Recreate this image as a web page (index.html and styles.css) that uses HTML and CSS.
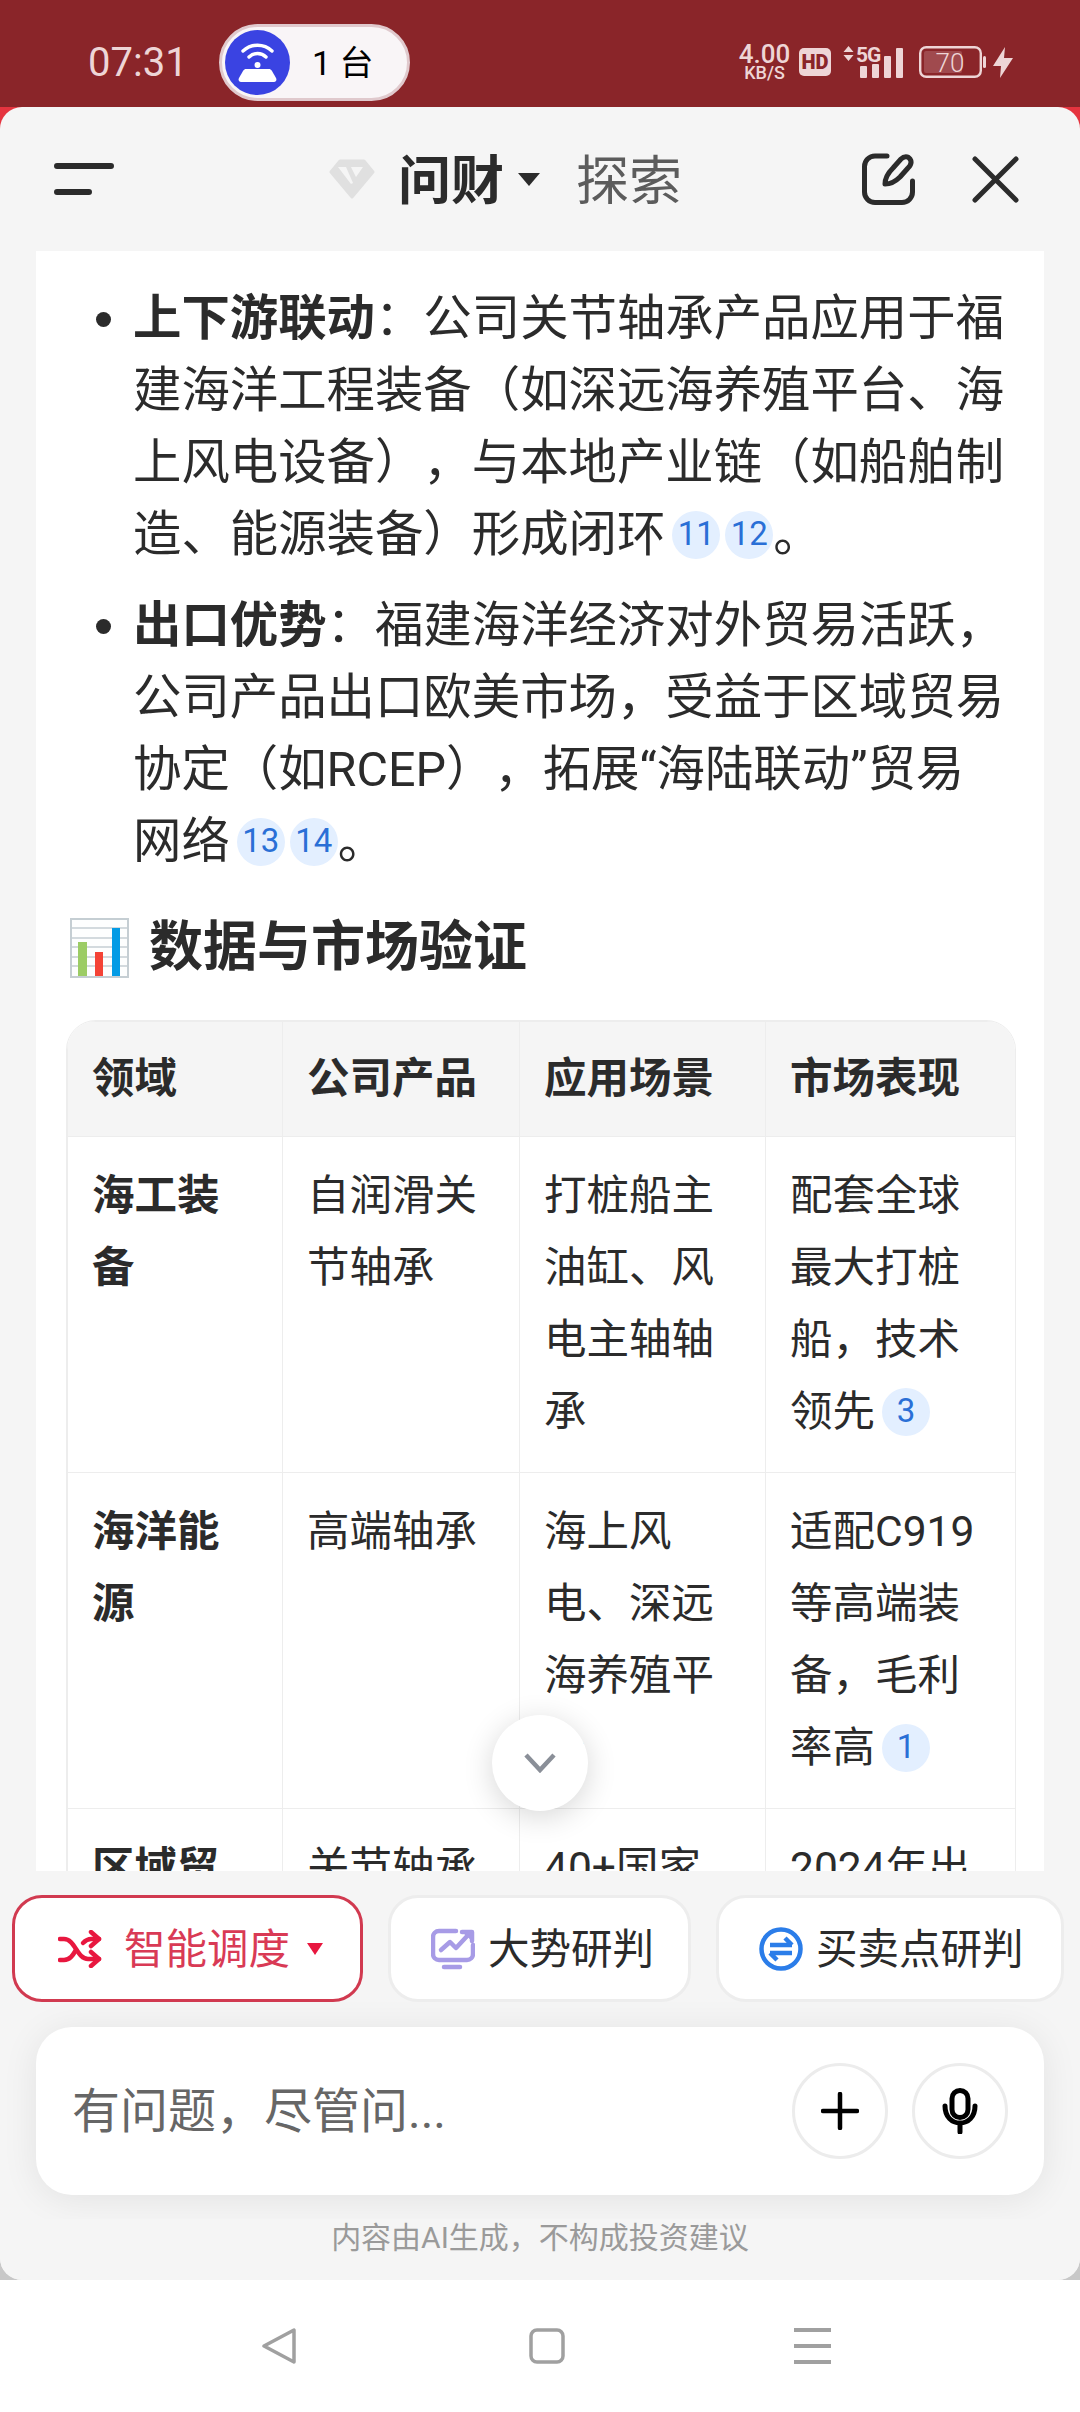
FILE: index.html
```html
<!DOCTYPE html>
<html lang="zh-CN">
<head>
    <meta charset="UTF-8">
    <meta name="viewport" content="width=device-width, initial-scale=1.0">
    <title>问财</title>
    <link rel="stylesheet" href="styles.css">
</head>
<body>
    <!-- status bar -->
    <div class="status">
        <span class="time">07:31</span>
        <div class="pill">
            <span class="pill-icon">
                <svg width="65" height="65" viewBox="0 0 65 65">
                    <circle cx="32.5" cy="32.5" r="32.5" fill="#3a43e2"/>
                    <g fill="none" stroke="#fff" stroke-width="3.4" stroke-linecap="round">
                        <path d="M18 21a21 21 0 0 1 29 0"/>
                        <path d="M24 27a12 12 0 0 1 17 0"/>
                    </g>
                    <circle cx="32.5" cy="35" r="3" fill="#fff"/>
                    <path d="M21 39h23c1 0 2 .5 3 2l4 7c1 2 0 4-2 4H16c-2 0-3-2-2-4l4-7c1-1.500 2-2 3-2z" fill="#fff"/>
                </svg>
            </span>
            <span class="pill-text">1 台</span>
        </div>
        <div class="status-right">
            <div class="speed">
                <span class="speed-num">4.00</span>
                <span class="speed-unit">KB/S</span>
            </div>
            <span class="hd">HD</span>
            <svg class="signal" width="60" height="32" viewBox="0 0 60 32">
                <path d="M5.500 0l5 6H.5zM5.500 15l5-6H.5z" fill="#eed5d6"/>
                <text x="13" y="16" class="signal-text">5G</text>
                <g fill="#eed5d6">
                    <rect x="17" y="20" width="7" height="12" rx="1"/>
                    <rect x="29" y="18" width="7" height="14" rx="1"/>
                    <rect x="41" y="10" width="7" height="22" rx="1"/>
                    <rect x="53" y="2" width="7" height="30" rx="1"/>
                </g>
            </svg>
            <svg class="battery" width="67" height="32" viewBox="0 0 67 32">
                <rect x="1.200" y="1.200" width="60.600" height="29.600" rx="6" fill="none" stroke="#eed5d6" stroke-width="2.400"/>
                <rect x="5" y="5" width="38" height="22" rx="2" fill="#a04a4e"/>
                <rect x="64" y="10" width="3" height="12" rx="1.500" fill="#eed5d6"/>
                <text x="31" y="26" class="battery-text" text-anchor="middle">70</text>
            </svg>
            <svg class="bolt" width="20" height="31" viewBox="0 0 20 31">
                <path d="M12 0L0 19h8l-1 12 13-20h-9z" fill="#eed5d6"/>
            </svg>
        </div>
    </div>

    <div class="shell">
        <div class="panel">
            <div class="topbar">
                <svg class="menu-icon" width="60" height="34" viewBox="0 0 60 34">
                    <path d="M3 4h54M3 30h32" stroke="#2b2b2b" stroke-width="6" stroke-linecap="round"/>
                </svg>
                <div class="tabs">
                    <svg class="logo" width="46" height="40" viewBox="0 0 46 40">
                        <path d="M11 2h24l9 11-21 25L2 13z" fill="#e0e0e0" stroke="#e0e0e0" stroke-width="3" stroke-linejoin="round"/>
                        <path d="M9 8h8l7 16-2 1zM22 8h12l-7 10z" fill="#f5f5f5"/>
                    </svg>
                    <span class="tab-active">问财</span>
                    <span class="tab-caret"></span>
                    <span class="tab">探索</span>
                </div>
                <div class="top-actions">
                    <svg width="53" height="52" viewBox="0 0 53 52" fill="none" stroke="#2b2b2b" stroke-width="5" stroke-linecap="round" stroke-linejoin="round">
                        <path d="M25 3H13A10.500 10.500 0 0 0 2.500 13.500V39A10.500 10.500 0 0 0 13 49.500h27A10.500 10.500 0 0 0 50.500 39V28"/>
                        <path d="M23 31c0-6 3-11 8-16l8-9c3-3 7-3 9 0s1 6-2 9l-8 9c-5 5-10 7-15 7z"/>
                    </svg>
                    <svg width="47" height="47" viewBox="0 0 47 47" fill="none" stroke="#2b2b2b" stroke-width="5" stroke-linecap="round">
                        <path d="M3 3l41 41M44 3L3 44"/>
                    </svg>
                </div>
            </div>

            <div class="content">
                <ul class="points">
                    <li><b>上下游联动</b>：公司关节轴承产品应用于福建海洋工程装备（如深远海养殖平台、海上风电设备），与本地产业链（如船舶制造、能源装备）形成闭环<span class="cite cite-first">11</span><span class="cite">12</span>。</li>
                    <li><b>出口优势</b>：福建海洋经济对外贸易活跃，公司产品出口欧美市场，受益于区域贸易协定（如RCEP），拓展“海陆联动”贸易网络<span class="cite cite-first">13</span><span class="cite">14</span>。</li>
                </ul>

                <h2 class="section-title">
                    <svg width="59" height="60" viewBox="0 0 59 60">
                        <rect x="1" y="1" width="57" height="58" fill="#fdfefe" stroke="#c5ced3" stroke-width="2"/>
                        <path d="M1 10h57M1 20h57M1 29h57M1 39h57M1 48h57" stroke="#c5ced3" stroke-width="1.500"/>
                        <rect x="8" y="24" width="9" height="34" fill="#9ccc65"/>
                        <rect x="25" y="34" width="8" height="24" fill="#f44336"/>
                        <rect x="42" y="10" width="8" height="48" fill="#039be5"/>
                    </svg>
                    <span>数据与市场验证</span>
                </h2>

                <div class="table-wrap">
                    <table class="data-table">
                        <colgroup>
                            <col class="col-a">
                            <col class="col-b">
                            <col class="col-c">
                            <col class="col-d">
                        </colgroup>
                        <thead>
                            <tr>
                                <th>领域</th>
                                <th>公司产品</th>
                                <th>应用场景</th>
                                <th>市场表现</th>
                            </tr>
                        </thead>
                        <tbody>
                            <tr>
                                <td><b>海工装备</b></td>
                                <td>自润滑关节轴承</td>
                                <td>打桩船主油缸、风电主轴轴承</td>
                                <td>配套全球最大打桩船，技术领先<span class="cite cite-first">3</span></td>
                            </tr>
                            <tr>
                                <td><b>海洋能源</b></td>
                                <td>高端轴承</td>
                                <td>海上风电、深远海养殖平台</td>
                                <td>适配C919等高端装备，毛利率高<span class="cite cite-first">1</span></td>
                            </tr>
                            <tr>
                                <td><b>区域贸易</b></td>
                                <td>关节轴承</td>
                                <td>40+国家出口</td>
                                <td>2024年出口增长</td>
                            </tr>
                        </tbody>
                    </table>
                </div>

                <div class="scroll-down">
                    <svg width="32" height="20" viewBox="0 0 32 20" fill="none" stroke="#8a8f98" stroke-width="4.500">
                        <path d="M2 2l14 15L30 2"/>
                    </svg>
                </div>
            </div>

            <div class="chips">
                <div class="chip chip-red">
                    <svg width="44" height="38" viewBox="0 0 44 38" fill="none" stroke="#e8173f" stroke-width="4.500" stroke-linecap="round" stroke-linejoin="round">
                        <path d="M2 9h4c11 0 13 20 24 20h11"/>
                        <path d="M2 30h4c6 0 9-5 12-10"/>
                        <path d="M25 13c2-2 4-4 8-4h8"/>
                        <path d="M33 2l8 7-8 7M33 22l8 7-8 7"/>
                    </svg>
                    <span class="chip-label">智能调度</span>
                    <span class="chip-caret"></span>
                </div>
                <div class="chip chip-trend">
                    <svg width="44" height="42" viewBox="0 0 44 42" fill="none" stroke="#a79be6" stroke-width="4.500" stroke-linecap="round" stroke-linejoin="round">
                        <path d="M25 3H8a6 6 0 0 0-6 6v17a6 6 0 0 0 6 6h28a6 6 0 0 0 6-6v-9"/>
                        <path d="M10 22l9-8 6 6 13-14"/>
                        <path d="M31 4h10v9" fill="#a79be6"/>
                        <path d="M13 39h16"/>
                    </svg>
                    <span class="chip-label">大势研判</span>
                </div>
                <div class="chip chip-trade">
                    <svg width="44" height="44" viewBox="0 0 44 44" fill="none" stroke="#2b7de9" stroke-width="4.500">
                        <circle cx="22" cy="22" r="19.500"/>
                        <path d="M11 18h22M26 11l7 7M33 26H11M18 33l-7-7"/>
                    </svg>
                    <span class="chip-label">买卖点研判</span>
                </div>
            </div>

            <div class="input-box">
                <span class="placeholder">有问题，尽管问...</span>
                <div class="input-actions">
                    <span class="round-btn">
                        <svg width="38" height="38" viewBox="0 0 38 38" fill="none" stroke="#000" stroke-width="4.500" stroke-linecap="round">
                            <path d="M19 2v34M2 19h34"/>
                        </svg>
                    </span>
                    <span class="round-btn">
                        <svg width="36" height="46" viewBox="0 0 36 46" fill="none" stroke="#000" stroke-width="5" stroke-linecap="round">
                            <rect x="10" y="2.500" width="16" height="27" rx="8"/>
                            <path d="M3 18c0 11 7 17 15 17s15-6 15-17M18 35v9"/>
                        </svg>
                    </span>
                </div>
            </div>

            <div class="notice">内容由AI生成，不构成投资建议</div>
        </div>
    </div>

    <!-- nav bar -->
    <div class="navbar">
        <svg width="34" height="36" viewBox="0 0 34 36" fill="none" stroke="#a0a0a0" stroke-width="3.500" stroke-linejoin="round">
            <path d="M32 2v32L2 18z"/>
        </svg>
        <svg width="36" height="36" viewBox="0 0 36 36" fill="none" stroke="#a0a0a0" stroke-width="3.500">
            <rect x="2" y="2" width="32" height="32" rx="6"/>
        </svg>
        <svg width="37" height="36" viewBox="0 0 37 36" stroke="#a0a0a0" stroke-width="4">
            <path d="M0 2h37M0 18h37M0 34h37"/>
        </svg>
    </div>
</body>
</html>
```

FILE: styles.css
```css
* {
    box-sizing: border-box;
}

body {
    margin: 0;
    width: 1080px;
    height: 2412px;
    display: flex;
    flex-direction: column;
    overflow: hidden;
    background: #fff;
    color: #2b2b2b;
    font-family: Roboto, "Noto Sans CJK SC", sans-serif;
    text-spacing-trim: space-all;
}

svg {
    display: block;
    flex-shrink: 0;
}

/* status bar */
.status {
    height: 107px;
    flex-shrink: 0;
    display: flex;
    align-items: center;
    padding: 17px 67px 0 88px;
    background: #8a2529;
    color: #eed5d6;
}

.time {
    font-size: 40px;
    width: 94px;
}

.pill {
    margin-left: 37px;
    width: 191px;
    height: 77px;
    display: flex;
    align-items: center;
    padding-left: 3px;
    border: 3px solid #e0c9cd;
    border-radius: 39px;
    background: #f9f5f7;
}

.pill-text {
    margin-left: 22px;
    margin-bottom: 4px;
    color: #000;
    font-size: 34px;
}

.status-right {
    margin-left: auto;
    display: flex;
    align-items: center;
}

.speed {
    width: 51px;
    display: flex;
    flex-direction: column;
    align-items: center;
    font-weight: 500;
}

.speed-num {
    font-size: 26px;
    line-height: 21px;
}

.speed-unit {
    font-size: 18px;
    line-height: 16px;
}

.hd {
    margin-left: 9px;
    width: 32px;
    height: 28px;
    display: flex;
    align-items: center;
    justify-content: center;
    border-radius: 5px;
    background: #eed5d6;
    color: #8a2529;
    font-size: 20px;
    font-weight: 900;
}

.signal {
    margin-left: 12px;
}

.signal-text {
    font-family: Roboto, sans-serif;
    font-size: 21px;
    font-weight: 700;
    letter-spacing: -1px;
    fill: #eed5d6;
}

.battery {
    margin-left: 16px;
}

.battery-text {
    font-family: Roboto, sans-serif;
    font-size: 26px;
    font-weight: 300;
    fill: #eed5d6;
}

.bolt {
    margin-left: 7px;
}

/* panel */
.shell {
    flex: 1;
    min-height: 0;
    background: linear-gradient(#e5343f 50%, #c8c8c8 50%);
}

.panel {
    height: 100%;
    display: flex;
    flex-direction: column;
    border-radius: 22px;
    background: #f5f5f5;
}

.topbar {
    height: 144px;
    flex-shrink: 0;
    display: flex;
    align-items: center;
    padding: 0 61px 0 54px;
}

.tabs {
    margin-left: 215px;
    display: flex;
    align-items: center;
}

.tab-active {
    margin-left: 23px;
    margin-bottom: 4px;
    font-size: 53px;
    font-weight: 700;
}

.tab-caret {
    margin-left: 14px;
    border-left: 11px solid transparent;
    border-right: 11px solid transparent;
    border-top: 13px solid #2b2b2b;
}

.tab {
    margin-left: 36px;
    margin-bottom: 4px;
    font-size: 53px;
    color: #5c5c5c;
}

.top-actions {
    margin-left: auto;
    display: flex;
    align-items: center;
    gap: 57px;
}

.content {
    flex: 1;
    min-height: 0;
    margin: 0 36px;
    position: relative;
    overflow: hidden;
    background: #fff;
}

.points {
    margin: 0;
    padding: 32px 36px 0 97px;
    font-size: 48.4px;
    line-height: 72px;
}

.points li {
    margin-bottom: 19px;
}

.cite {
    display: inline-block;
    vertical-align: 6px;
    width: 48px;
    height: 48px;
    margin-left: 5px;
    border-radius: 50%;
    background: #e3efff;
    color: #2a6fd6;
    font-size: 33px;
    line-height: 46px;
    font-weight: 400;
    text-align: center;
}

.cite-first {
    margin-left: 7px;
}

.section-title {
    margin: 34px 0 36px;
    padding-left: 34px;
    display: flex;
    align-items: center;
    gap: 20px;
    font-size: 54px;
    line-height: 72px;
    font-weight: 700;
}

.table-wrap {
    width: 950px;
    margin-left: 30px;
    border-radius: 30px 30px 0 0;
    border: 1px solid #ededed;
    overflow: hidden;
}

.data-table {
    width: 100%;
    table-layout: fixed;
    border-collapse: collapse;
    font-size: 42.5px;
    line-height: 72px;
}

.col-a { width: 215px; }
.col-b { width: 237px; }
.col-c { width: 246px; }
.col-d { width: 252px; }

.data-table th {
    padding: 21px 26px 21px 24px;
    background: #f5f5f5;
    text-align: left;
    font-weight: 700;
}

.data-table td {
    padding: 23px 26px 24px 24px;
    vertical-align: top;
}

.data-table th,
.data-table td {
    border: 1px solid #ededed;
}

.data-table .cite {
    vertical-align: 4px;
}

.scroll-down {
    position: absolute;
    left: 456px;
    top: 1464px;
    width: 96px;
    height: 96px;
    display: flex;
    align-items: center;
    justify-content: center;
    border-radius: 50%;
    background: #fff;
    box-shadow: 0 6px 30px rgba(0, 0, 0, .16);
}

/* chips */
.chips {
    flex-shrink: 0;
    margin-top: 24px;
    padding-left: 12px;
    display: flex;
    gap: 25px;
    font-size: 41.5px;
}

.chip {
    height: 107px;
    display: flex;
    align-items: center;
    gap: 13px;
    border: 3px solid #ededed;
    border-radius: 30px;
    background: #fff;
}

.chip-label {
    margin-bottom: 6px;
}

.chip-red {
    gap: 22px;
    padding: 0 37px 0 43px;
    border-color: #d13a50;
    color: #d93a55;
}

.chip-trend {
    padding: 0 34px 0 40px;
}

.chip-trade {
    padding: 0 37px 0 40px;
}

.chip-caret {
    margin-left: -5px;
    border-left: 8px solid transparent;
    border-right: 8px solid transparent;
    border-top: 12px solid #e8173f;
}

/* input */
.input-box {
    flex-shrink: 0;
    height: 168px;
    margin: 25px 36px 0;
    display: flex;
    align-items: center;
    padding: 0 36px;
    border-radius: 36px;
    background: #fff;
    box-shadow: 0 4px 36px rgba(0, 0, 0, .08);
}

.placeholder {
    margin-bottom: 8px;
    font-size: 48px;
    color: #666;
}

.input-actions {
    margin-left: auto;
    display: flex;
    gap: 24px;
}

.round-btn {
    width: 96px;
    height: 96px;
    display: flex;
    align-items: center;
    justify-content: center;
    border: 3px solid #ececec;
    border-radius: 50%;
}

.notice {
    flex: none;
    height: 61px;
    margin-top: 24px;
    position: relative;
    border-radius: 0 0 22px 22px;
    background: #f5f5f5;
    color: #9a9a9a;
    font-size: 30px;
    line-height: 38px;
    text-align: center;
}

/* nav bar */
.navbar {
    height: 132px;
    flex-shrink: 0;
    display: grid;
    grid-template-columns: 267px 265px 1fr;
    align-items: center;
    padding-left: 262px;
    background: #fff;
}
```
